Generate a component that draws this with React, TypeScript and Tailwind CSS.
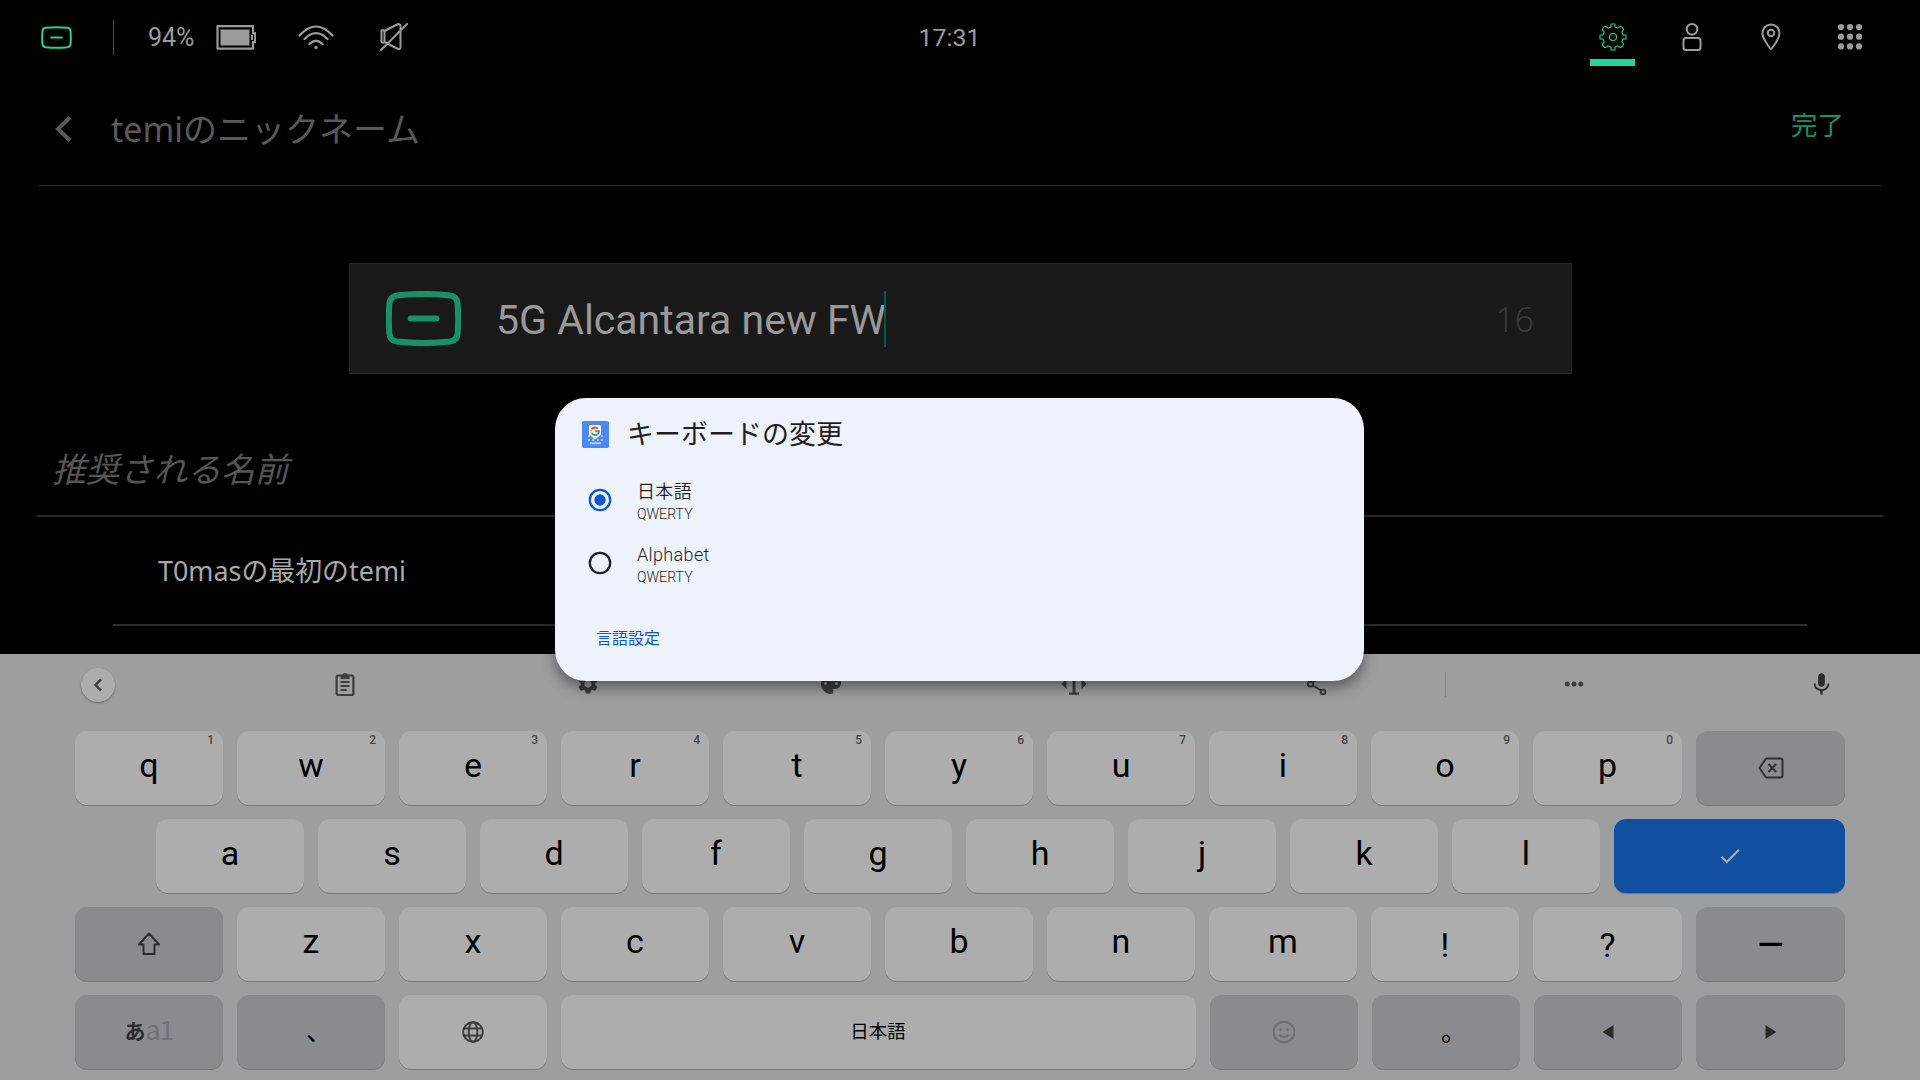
import type { ReactNode } from "react";
import { MdCheck, MdMic, MdPalette, MdSettings } from "react-icons/md";

function TemiLogo({ className, stroke }: { className: string; stroke: number }) {
  return (
    <svg viewBox="0 0 76 56" preserveAspectRatio="none" className={className} fill="none" stroke="currentColor" strokeWidth={stroke}>
      <path d="M11 4.500Q38 1.500 65 4.500Q72 5.500 72.600 13Q73.600 28 72.600 43Q72 50.500 65 51.500Q38 54.500 11 51.500Q4 50.500 3.400 43Q2.400 28 3.400 13Q4 5.500 11 4.500Z" />
      <path d="M25 28H51" strokeLinecap="round" />
    </svg>
  );
}

function StatusBar() {
  return (
    <header className="flex h-[74px] items-center text-[#9b9b9b]">
      <div className="flex w-[640px] items-center">
        <TemiLogo className="ml-[41px] h-[23px] w-[31px] text-[#22d39b]" stroke={4.8} />
        <div className="ml-[41px] h-[35px] w-px bg-[#4c4c4c]" />
        <span className="ml-[34px] w-[68px] pt-px text-[25px]">94%</span>
        <svg viewBox="0 0 40 25" className="h-[25px] w-10 shrink-0" fill="none" stroke="currentColor">
          <path d="M1.500 1.200h35.500v7h2.200v9h-2.200v6.500H1.500z" strokeWidth="2.200" strokeLinejoin="round" />
          <path d="M36 10v5" strokeWidth="2" />
          <path d="M4.500 4.500h29v16h-29z" fill="currentColor" stroke="none" />
        </svg>
        <svg viewBox="0 0 36 25" className="ml-[42px] h-[25px] w-9 shrink-0" fill="none" stroke="currentColor" strokeWidth="2.200" strokeLinecap="round">
          <path d="M1.500 10.500Q18-7.500 34.500 10.500M6.500 14Q18 2.500 29.500 14M11.300 19Q18 12.500 24.700 19" />
          <circle cx="18" cy="22.500" r="1.700" fill="currentColor" stroke="none" />
        </svg>
        <svg viewBox="0 0 28 28" className="ml-[46px] size-7 shrink-0" fill="none" stroke="currentColor" strokeWidth="2" strokeLinejoin="round" strokeLinecap="round">
          <path d="M1.500 7.500Q3 6.500 4.500 8L17 1.500Q20.500 0 20.500 4V24Q20.500 27 17 25.500L4.500 19Q3 20.500 1.500 19ZM4.500 8V19M1 27L27 1" />
        </svg>
      </div>
      <span className="w-[619px] pt-px text-center text-[24.800px]">17:31</span>
      <nav className="flex flex-1 justify-end gap-[34px] pr-[48px]">
        <div className="relative flex w-[45px] justify-center text-[#22d39b]">
          <svg viewBox="0 0 28 28" className="size-7" fill="none" stroke="currentColor" strokeWidth="1.100" strokeLinejoin="round">
            <path d="M12 1h4v3l3 1.200L21.300 3.300Q23 3.500 24.700 6.700L22.800 9L24 12h3v4h-3l-1.200 3 1.900 2.300Q23 24.500 21.300 24.700L19 22.800 16 24v3h-4v-3l-3-1.200-2.300 1.900Q4.500 24.500 3.300 21.300L5.200 19 4 16H1v-4h3l1.200-3L3.300 6.700Q4 4 6.700 3.300L9 5.200 12 4z" />
            <circle cx="14" cy="14" r="3.500" />
          </svg>
          <div className="absolute -bottom-[15px] h-[7px] w-[45px] bg-[#22d39b]" />
        </div>
        <div className="flex w-[45px] justify-center">
          <svg viewBox="0 0 20 28" className="h-7 w-5" fill="none" stroke="currentColor" strokeWidth="2">
            <circle cx="10" cy="6.300" r="5.300" />
            <path d="M4 15H16Q18.500 15 18.500 18V24.500Q18.500 27 16 27H4Q1.500 27 1.500 24.500V18Q1.500 15 4 15Z" />
          </svg>
        </div>
        <div className="flex w-[45px] justify-center">
          <svg viewBox="0 0 20 28" className="h-7 w-5" fill="none" stroke="currentColor" strokeWidth="2">
            <path d="M10 26Q9 26 4.500 18.500Q1.500 13.500 1.500 10A8.500 8.500 0 0 1 18.500 10Q18.500 13.500 15.500 18.500Q11 26 10 26Z" />
            <circle cx="10" cy="10" r="3.200" />
          </svg>
        </div>
        <div className="flex w-[45px] justify-center">
          <svg viewBox="0 0 26 28" className="h-7 w-[26px]" fill="currentColor">
            {[4, 13.7, 23.4].map((y) => [4, 13, 22].map((x) => <circle key={`${x}-${y}`} cx={x} cy={y} r="3.100" />))}
          </svg>
        </div>
      </nav>
    </header>
  );
}

function Key({ children, dark, hint, className = "w-[148px]" }: { children?: ReactNode; dark?: boolean; hint?: string; className?: string }) {
  return (
    <div
      className={`relative flex h-[74px] items-center justify-center rounded-xl shadow-[0_1px_0_#77787a] ${dark ? "bg-[#8a8b90]" : "bg-[#adadad]"} ${className}`}
    >
      {hint && <span className="absolute top-px right-[9px] text-xs leading-4 font-medium text-[#444]">{hint}</span>}
      {children}
    </div>
  );
}

function Letter({ children }: { children: ReactNode }) {
  return <span className="-mt-[6px] text-[34px] leading-10 text-black">{children}</span>;
}

const ROW_1 = ["q", "w", "e", "r", "t", "y", "u", "i", "o", "p"];
const ROW_2 = ["a", "s", "d", "f", "g", "h", "j", "k", "l"];
const ROW_3 = ["z", "x", "c", "v", "b", "n", "m"];

function Toolbar() {
  return (
    <div className="flex h-[61px] items-center pl-[81px]">
      <div className="flex size-[34px] items-center justify-center rounded-full bg-[#adadad] shadow-[0_1px_2px_#666]">
        <svg viewBox="0 0 10 14" className="h-[14px] w-[10px]" fill="none" stroke="currentColor" strokeWidth="2.400">
          <path d="M8 1.300L2.500 7L8 12.700" />
        </svg>
      </div>
      <div className="flex w-[1330px] items-center pl-[108px]">
        <div className="flex w-[243px] justify-center">
          <svg viewBox="0 0 20 26" className="-mt-px h-[26px] w-5" fill="none" stroke="currentColor">
            <rect x="1.600" y="4.500" width="16.800" height="19.500" rx="1.500" strokeWidth="2.200" />
            <path d="M5.500 11h9M5.500 15h9M5.500 19h6.200" strokeWidth="2" />
            <path d="M5.500 4H7.300A2.800 2.800 0 0 1 12.700 4H14.500V8H5.500ZM10 3.600A1 1 0 1 0 10.010 3.600Z" fill="currentColor" fillRule="evenodd" stroke="none" />
          </svg>
        </div>
        <div className="flex w-[243px] justify-center"><MdSettings className="-mt-px size-6" /></div>
        <div className="flex w-[243px] justify-center"><MdPalette className="-mt-px size-6" /></div>
        <div className="flex w-[243px] justify-center">
          <svg viewBox="0 0 26 24" className="-mt-px h-6 w-[26px]" fill="currentColor">
            <path d="M8 1h10v2h-3.500v17.500h3.500v2.300H8v-2.300h3.500V3H8zM5.500 7v10L.5 12zM20.500 7v10l5-5z" />
          </svg>
        </div>
        <div className="flex w-[243px] justify-center">
          <svg viewBox="0 0 24 24" className="-mt-px size-6" fill="none" stroke="currentColor" strokeWidth="2">
            <path d="M7 11L16 5.500M7 13L16 18.500" />
            <circle cx="5.500" cy="12" r="2.600" />
            <circle cx="18" cy="4.500" r="2.300" />
            <circle cx="18" cy="20" r="2.300" />
          </svg>
        </div>
      </div>
      <div className="h-[25px] w-px bg-[#858688]" />
      <div className="flex w-[256px] justify-center">
        <svg viewBox="0 0 20 6" className="-mt-px h-[6px] w-5" fill="currentColor">
          <circle cx="3.200" cy="3" r="2.500" />
          <circle cx="10" cy="3" r="2.500" />
          <circle cx="16.800" cy="3" r="2.500" />
        </svg>
      </div>
      <div className="ml-[106px] w-[27px]"><MdMic className="size-[27px] text-[#2b2c2e]" /></div>
    </div>
  );
}

function Keyboard() {
  return (
    <section className="h-[426px] bg-[#9d9ea0] text-[#3c3d3f]">
      <Toolbar />
      <div className="flex flex-col gap-[14px] px-[75px] pt-4">
        <div className="flex gap-[14px]">
          {ROW_1.map((k, i) => (
            <Key key={k} hint={String((i + 1) % 10)} className={k === "p" ? "w-[149px]" : "w-[148px]"}>
              <Letter>{k}</Letter>
            </Key>
          ))}
          <Key dark className="flex-1">
            <svg viewBox="0 0 26 22" className="h-[22px] w-[26px]" fill="none" stroke="#2f3032" strokeWidth="2" strokeLinejoin="round">
              <path d="M8 1.500H22.500Q24.500 1.500 24.500 3.500V18.500Q24.500 20.500 22.500 20.500H8L1.500 11Z" />
              <path d="M10.500 7L18 15M18 7L10.500 15" />
            </svg>
          </Key>
        </div>
        <div className="flex gap-[14px] pl-[81px]">
          {ROW_2.map((k) => (
            <Key key={k}>
              <Letter>{k}</Letter>
            </Key>
          ))}
          <Key className="flex-1 bg-[#114fa0]!"><MdCheck className="size-[26px] text-[#adadad]" /></Key>
        </div>
        <div className="flex gap-[14px]">
          <Key dark>
            <svg viewBox="0 0 24 24" className="size-6 text-[#2b2c2e]" fill="none" stroke="currentColor" strokeWidth="1.900" strokeLinejoin="round">
              <path d="M12 1.500L22 12.500H17.500V22H6.500V12.500H2Z" />
            </svg>
          </Key>
          {ROW_3.map((k) => (
            <Key key={k}><Letter>{k}</Letter></Key>
          ))}
          <Key><span className="mt-[2px] text-[34px] leading-10 text-black">!</span></Key>
          <Key className="w-[149px]"><span className="mt-[2px] text-[34px] leading-10 text-black">?</span></Key>
          <Key dark className="flex-1"><span className="-mt-px text-[34px] leading-10 font-medium text-black">—</span></Key>
        </div>
        <div className="flex gap-[14px]">
          <Key dark>
            <span className="text-[21px] leading-6 font-bold text-[#2b2c2e]">あ</span>
            <span className="-mt-[7px] font-['Noto_Sans_CJK_JP',sans-serif] text-[27px] leading-6 font-normal text-[#707176] tracking-[-1px]">a1</span>
          </Key>
          <Key dark><span className="pl-4 text-[26px] leading-8 text-black">、</span></Key>
          <Key>
            <svg viewBox="0 0 24 24" className="size-6" fill="none" stroke="currentColor" strokeWidth="1.900">
              <circle cx="12" cy="12" r="9.800" />
              <ellipse cx="12" cy="12" rx="4.300" ry="9.800" />
              <path d="M3 8.500H21M3 15.500H21" />
            </svg>
          </Key>
          <Key className="flex-1"><span className="pt-[2px] pr-px text-[18.500px] text-black">日本語</span></Key>
          <Key dark>
            <svg viewBox="0 0 24 24" className="size-6 text-[#6c6d72]" fill="none" stroke="currentColor" strokeWidth="2">
              <circle cx="12" cy="12" r="10.300" />
              <path d="M7 14.500Q12 19.500 17 14.500" />
              <circle cx="8.400" cy="9.500" r="1.600" fill="currentColor" stroke="none" />
              <circle cx="15.600" cy="9.500" r="1.600" fill="currentColor" stroke="none" />
            </svg>
          </Key>
          <Key dark><span className="pl-4 text-[26px] leading-8 text-black">。</span></Key>
          <Key dark>
            <svg viewBox="0 0 12 14" className="h-[14px] w-3" fill="#2b2c2e"><path d="M11.500 0V14L.5 7z" /></svg>
          </Key>
          <Key dark className="w-[149px]">
            <svg viewBox="0 0 12 14" className="h-[14px] w-3" fill="#2b2c2e"><path d="M.5 0V14L11.500 7z" /></svg>
          </Key>
        </div>
      </div>
    </section>
  );
}

function GboardIcon() {
  return (
    <svg viewBox="0 0 27 27" className="size-[27px]">
      <rect width="27" height="27" rx="2" fill="#4a88f4" />
      <path d="M6 15h2M10 15h2M15 15h2M19 15h2M6 19h2M10 19h2M15 19h2M19 19h2" stroke="#a9c7fb" strokeWidth="1.800" />
      <path d="M8 21.300h11v1.900H8z" fill="#bcd4fc" />
      <path d="M8.500 4h9q1.500 0 1.500 1.500V13.500L13 18.500 7 13.500V5.500Q7 4 8.500 4Z" fill="#fff" />
      <g fill="none" strokeWidth="1.900">
        <path d="M16 7.700A3.900 3.900 0 0 0 9.800 8.300" stroke="#ea4335" />
        <path d="M9.800 8.300A3.900 3.900 0 0 0 9.800 12.200" stroke="#fbbc05" />
        <path d="M9.800 12.200A3.900 3.900 0 0 0 15.600 13.200" stroke="#34a853" />
        <path d="M15.600 13.200A3.900 3.900 0 0 0 17 10.200H13.200" stroke="#4285f4" />
      </g>
    </svg>
  );
}

function Option({ title, selected }: { title: string; selected?: boolean }) {
  return (
    <div className="flex h-[63px] items-center">
      <svg viewBox="0 0 24 24" className={`size-6 ${selected ? "text-[#0b57d0]" : "text-[#1f1f1f]"}`} fill="none" stroke="currentColor">
        <circle cx="12" cy="12" r="10.200" strokeWidth="2.300" />
        {selected && <circle cx="12" cy="12" r="5.700" fill="currentColor" stroke="none" />}
      </svg>
      <div className="ml-[25px] pt-[5px] text-[#1f1f1f]">
        <div className="text-[18px] leading-6 font-[350] tracking-[0.35px]">{title}</div>
        <div className="text-[14px] leading-5 font-[350] tracking-[0.1px]">QWERTY</div>
      </div>
    </div>
  );
}

function LanguageDialog() {
  return (
    <div className="absolute top-[398px] left-[555px] h-[283px] w-[809px] rounded-[31px] bg-[#eef3fb] pt-[20px] pl-[27px] shadow-[0_7px_14px_rgba(0,0,0,0.42)]">
      <div className="flex h-8 items-center gap-[18px]">
        <GboardIcon />
        <h2 className="pt-[2px] text-[27px] leading-8 font-normal text-[#1f1f1f]">キーボードの変更</h2>
      </div>
      <div className="pt-[18px] pl-[6px]">
        <Option title="日本語" selected />
        <Option title="Alphabet" />
      </div>
      <div className="mt-[33px] pl-[14px] text-base text-[#0b57d0]">言語設定</div>
    </div>
  );
}

export default function App() {
  return (
    <div className="relative h-[1080px] w-[1920px] overflow-hidden bg-black font-[Roboto,'Noto_Sans_CJK_JP',sans-serif]">
      <StatusBar />
      <main className="h-[580px] font-['Noto_Sans','Noto_Sans_CJK_JP',sans-serif]">
        <div className="mx-[39px] flex h-[112px] items-center border-b border-[#333] pr-[37px] pb-[2px] pl-[15px]">
          <svg viewBox="0 0 18 28" className="h-7 w-[18px]" fill="none" stroke="#595959" strokeWidth="4">
            <path d="M16 2.500L4 14L16 25.500" />
          </svg>
          <h1 className="ml-[39px] text-[34px] leading-10 font-normal text-[#595959]">temiのニックネーム</h1>
          <span className="ml-auto pb-[7px] text-[26.500px] leading-8 text-[#179268]">完了</span>
        </div>
        <div className="mt-[77px] ml-[349px] flex h-[111px] w-[1223px] items-center border border-[#262626] bg-[#191919] pr-[37px] pl-[36px]">
          <TemiLogo className="h-[55px] w-[75px] text-[#179268]" stroke={6.1} />
          <span className="ml-[35px] pt-[2px] font-[Roboto] text-[41px] leading-[50px] text-[#999]">5G Alcantara new FW</span>
          <div className="-ml-[2px] h-14 w-[2px] bg-[#00564f]" />
          <span className="ml-auto pt-px text-[34px] font-light text-[#3a3a3a]">16</span>
        </div>
        <div className="mx-[37px] mt-[69px] h-[74px] border-b-2 border-[#2b2b2b] pt-[2px] pl-[15px] text-[33.800px] leading-[48px] text-[#555] italic">
          推奨される名前
        </div>
        <div className="mx-[113px] flex h-[109px] items-center border-b-2 border-[#2b2b2b] pt-[2px] pl-[45px] text-[26.900px] text-[#a8a8a8]">
          T0masの最初のtemi
        </div>
      </main>
      <Keyboard />
      <LanguageDialog />
    </div>
  );
}
